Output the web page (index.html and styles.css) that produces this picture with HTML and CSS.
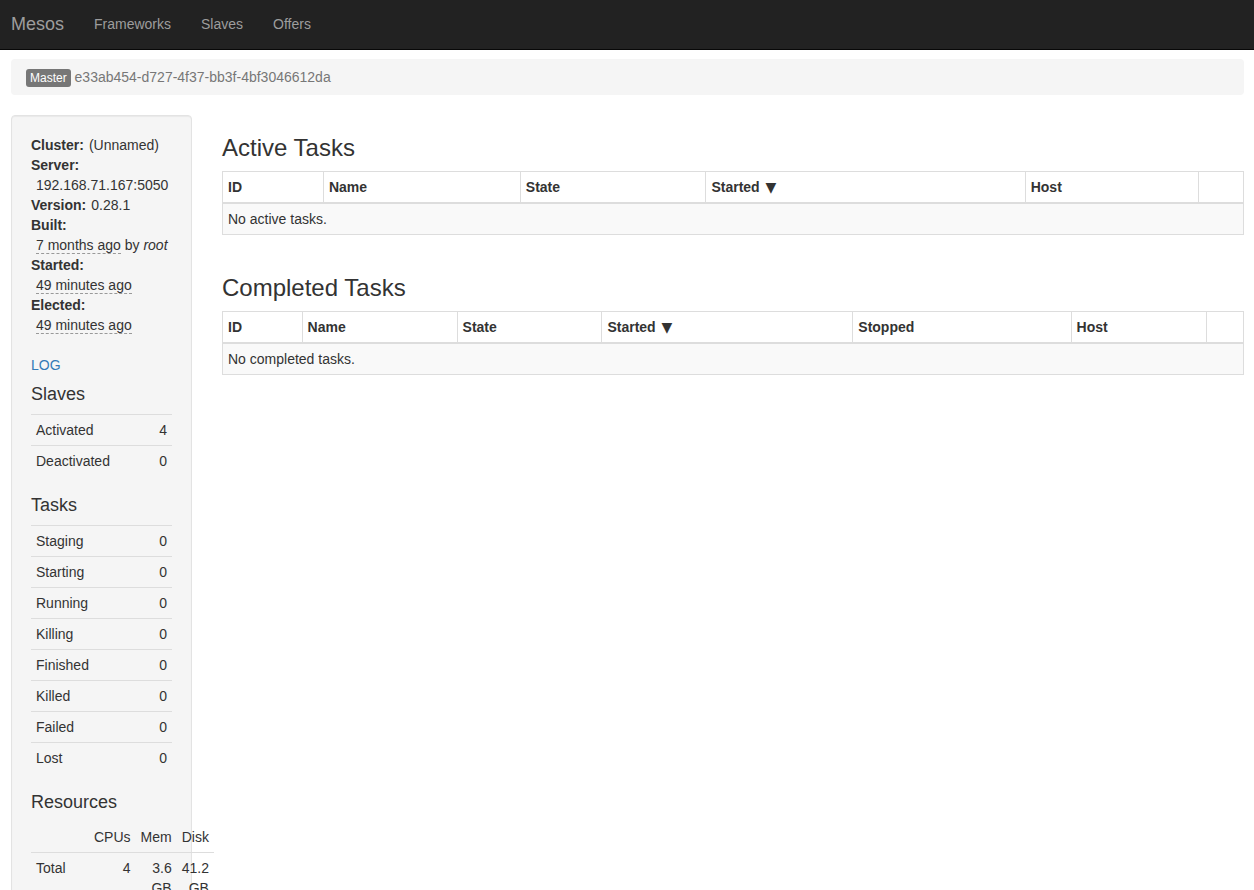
FILE: index.html
```html
<!DOCTYPE html>
<html lang="en">
<head>
<meta charset="utf-8">
<title>Mesos</title>
<link rel="stylesheet" href="styles.css">
</head>
<body>
<nav class="navbar">
  <a class="brand" href="#">Mesos</a>
  <a class="nav-link" href="#frameworks">Frameworks</a>
  <a class="nav-link" href="#slaves">Slaves</a>
  <a class="nav-link" href="#offers">Offers</a>
</nav>
<div class="container">
  <div class="breadcrumb"><span class="badge">Master</span> <span>e33ab454-d727-4f37-bb3f-4bf3046612da</span></div>
  <div class="columns">
    <aside class="well">
      <dl class="facts">
        <div class="fact"><dt>Cluster:</dt><dd>(Unnamed)</dd></div>
        <div class="fact"><dt>Server:</dt><dd>192.168.71.167:5050</dd></div>
        <div class="fact"><dt>Version:</dt><dd>0.28.1</dd></div>
        <div class="fact"><dt>Built:</dt><dd><span class="ago">7 months ago</span> by <i>root</i></dd></div>
        <div class="fact"><dt>Started:</dt><dd><span class="ago">49 minutes ago</span></dd></div>
        <div class="fact"><dt>Elected:</dt><dd><span class="ago">49 minutes ago</span></dd></div>
      </dl>
      <a class="log" href="#log">LOG</a>
      <h4>Slaves</h4>
      <table class="stats">
        <tbody>
          <tr><th scope="row">Activated</th><td>4</td></tr>
          <tr><th scope="row">Deactivated</th><td>0</td></tr>
        </tbody>
      </table>
      <h4>Tasks</h4>
      <table class="stats">
        <tbody>
          <tr><th scope="row">Staging</th><td>0</td></tr>
          <tr><th scope="row">Starting</th><td>0</td></tr>
          <tr><th scope="row">Running</th><td>0</td></tr>
          <tr><th scope="row">Killing</th><td>0</td></tr>
          <tr><th scope="row">Finished</th><td>0</td></tr>
          <tr><th scope="row">Killed</th><td>0</td></tr>
          <tr><th scope="row">Failed</th><td>0</td></tr>
          <tr><th scope="row">Lost</th><td>0</td></tr>
        </tbody>
      </table>
      <h4>Resources</h4>
      <table class="stats resources">
        <thead>
          <tr><td></td><th scope="col">CPUs</th><th scope="col">Mem</th><th scope="col">Disk</th></tr>
        </thead>
        <tbody>
          <tr><th scope="row">Total</th><td>4</td><td>3.6 GB</td><td>41.2 GB</td></tr>
        </tbody>
      </table>
    </aside>
    <main class="content">
      <section class="tasks">
        <h3>Active Tasks</h3>
        <table class="grid active">
          <thead>
            <tr>
              <th class="id"><button type="button">ID</button></th>
              <th class="name"><button type="button">Name</button></th>
              <th class="state"><button type="button">State</button></th>
              <th class="started"><button type="button">Started <span class="arrow">▼</span></button></th>
              <th class="host"><button type="button">Host</button></th>
              <th></th>
            </tr>
          </thead>
          <tbody><tr><td colspan="6">No active tasks.</td></tr></tbody>
        </table>
      </section>
      <section class="tasks">
        <h3>Completed Tasks</h3>
        <table class="grid completed">
          <thead>
            <tr>
              <th class="id"><button type="button">ID</button></th>
              <th class="name"><button type="button">Name</button></th>
              <th class="state"><button type="button">State</button></th>
              <th class="started"><button type="button">Started <span class="arrow">▼</span></button></th>
              <th class="stopped"><button type="button">Stopped</button></th>
              <th class="host"><button type="button">Host</button></th>
              <th></th>
            </tr>
          </thead>
          <tbody><tr><td colspan="7">No completed tasks.</td></tr></tbody>
        </table>
      </section>
    </main>
  </div>
</div>
</body>
</html>
```
FILE: styles.css
```css
* { box-sizing: border-box; }
html { scrollbar-width: none; }
body {
  margin: 0;
  background: #fff;
  color: #333;
  font: 14px/20px "Liberation Sans", Arial, "DejaVu Sans", sans-serif;
}
a { color: #337ab7; text-decoration: none; }

.navbar {
  display: flex;
  padding: 14px 11px 15px;
  background: #222;
  border-bottom: 1px solid #080808;
}
.brand, .nav-link { color: #9d9d9d; }
.brand { font-size: 18px; padding-right: 15px; }
.nav-link { padding: 0 15px; }

.container { padding: 9px 10px 0 11px; }
.breadcrumb {
  padding: 8px 15px;
  margin-bottom: 20px;
  background: #f5f5f5;
  border-radius: 4px;
  color: #777;
}
.badge {
  display: inline-block;
  padding: 0 4px;
  border-radius: 3px;
  background: #777;
  color: #fff;
  font-size: 12px;
  line-height: 18px;
}
.columns { display: flex; align-items: flex-start; gap: 30px; }

.well {
  flex: 0 0 181px;
  min-width: 0;
  padding: 19px;
  background: #f5f5f5;
  border: 1px solid #e3e3e3;
  border-radius: 4px;
  box-shadow: inset 0 1px 1px rgba(0, 0, 0, .05);
}
.facts { margin: 0 0 20px; }
.fact { display: flex; flex-wrap: wrap; }
.fact dt { font-weight: bold; }
.fact dd { margin: 0 0 0 5px; white-space: nowrap; }
.ago { border-bottom: 1px dashed #999; }
.log { display: block; }

h3, h4 { margin: 0 0 10px; font-weight: normal; }
h3 { font-size: 24px; line-height: 26px; }
h4 { font-size: 18px; line-height: 19px; margin-top: 10px; }

table { width: 100%; border-collapse: separate; border-spacing: 0; }
.stats { margin-bottom: 20px; }
.stats th, .stats td {
  padding: 5px;
  border-top: 1px solid #ddd;
  text-align: right;
  vertical-align: top;
  font-weight: normal;
}
.stats tbody th { text-align: left; }
.stats thead th, .stats thead td { border-top: 0; }
.resources tbody th { min-width: 58px; }

.content { flex: 1; min-width: 0; padding-top: 20px; }
.tasks { margin-bottom: 40px; }
.grid { table-layout: fixed; border: 1px solid #ddd; }
.grid th, .grid td { padding: 5px; text-align: left; }
.grid th { border-bottom: 2px solid #ddd; line-height: 19px; }
.grid th + th { border-left: 1px solid #ddd; }
.grid td { background: #f9f9f9; }
.grid button {
  display: block;
  height: 20px;
  padding: 0;
  border: 0;
  background: none;
  color: inherit;
  font: inherit;
  line-height: 20px;
  cursor: pointer;
}
.arrow { margin-left: 2px; font-family: "DejaVu Sans", sans-serif; line-height: 1; }
.active .id { width: 9.8%; }
.active .name { width: 19.3%; }
.active .state { width: 18.2%; }
.active .started { width: 31.3%; }
.active .host { width: 17%; }
.completed .id { width: 7.7%; }
.completed .name { width: 15.2%; }
.completed .state { width: 14.2%; }
.completed .started { width: 24.6%; }
.completed .stopped { width: 21.4%; }
.completed .host { width: 13.3%; }
```
